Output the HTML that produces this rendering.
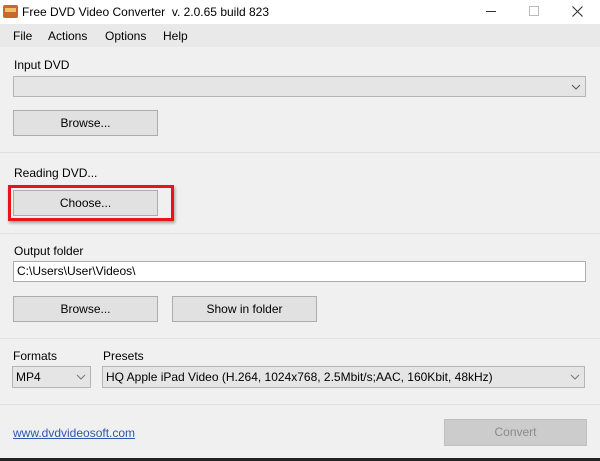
<!DOCTYPE html><html><head><style>
*{margin:0;padding:0;box-sizing:border-box}
body{width:600px;height:461px;background:#f0f0f0;font-family:"Liberation Sans",sans-serif;font-size:12px;color:#000;position:relative;overflow:hidden}
.a{position:absolute}
.btn{position:absolute;background:#e1e1e1;border:1px solid #adadad;text-align:center;line-height:24px;font-size:12px}
.sep{position:absolute;left:0;width:600px;height:1px;background:#e0e0e0}
.cb{position:absolute;background:#e5e5e5;border:1px solid #b5b5b5;line-height:19px;padding-left:3px}
.ch{position:absolute;right:4px;top:50%;margin-top:-3px}
</style></head><body>
<div class="a" style="left:0;top:0;width:600px;height:24px;background:#fff"></div>
<div class="a" style="left:3px;top:5px;width:15px;height:13px;background:#c8682a;border-radius:2px"></div>
<div class="a" style="left:5px;top:8px;width:11px;height:4px;background:#f3c06a"></div>
<div class="a" style="left:22px;top:5px;font-size:12px">Free DVD Video Converter&nbsp; v. 2.0.65 build 823</div>
<div class="a" style="left:486px;top:11px;width:10px;height:1px;background:#333"></div>
<div class="a" style="left:529px;top:6px;width:10px;height:10px;border:1px solid #bbb"></div>
<svg class="a" style="left:572px;top:6px" width="11" height="11"><path d="M0.5 0.5L10.5 10.5M10.5 0.5L0.5 10.5" stroke="#333" stroke-width="1.1"/></svg>
<div class="a" style="left:0;top:24px;width:600px;height:23px;background:#e9e9e9"></div>
<div class="a" style="left:13px;top:29px">File</div>
<div class="a" style="left:48px;top:29px">Actions</div>
<div class="a" style="left:105px;top:29px">Options</div>
<div class="a" style="left:163px;top:29px">Help</div>
<div class="a" style="left:14px;top:58px">Input DVD</div>
<div class="cb" style="left:13px;top:76px;width:573px;height:21px"><svg class="ch" width="10" height="6"><path d="M1 1L5 5L9 1" fill="none" stroke="#555"/></svg></div>
<div class="btn" style="left:13px;top:110px;width:145px;height:26px">Browse...</div>
<div class="sep" style="top:152px"></div>
<div class="a" style="left:14px;top:166px">Reading DVD...</div>
<div class="btn" style="left:13px;top:190px;width:145px;height:26px">Choose...</div>
<div class="a" style="left:8px;top:185px;width:166px;height:36px;border:3px solid #e8141b;box-shadow:1px 2px 3px rgba(0,0,0,.35)"></div>
<div class="sep" style="top:233px"></div>
<div class="a" style="left:14px;top:244px">Output folder</div>
<div class="a" style="left:13px;top:261px;width:573px;height:21px;background:#fff;border:1px solid #adadad;line-height:19px;padding-left:3px">C:\Users\User\Videos\</div>
<div class="btn" style="left:13px;top:296px;width:145px;height:26px">Browse...</div>
<div class="btn" style="left:172px;top:296px;width:145px;height:26px">Show in folder</div>
<div class="sep" style="top:338px"></div>
<div class="a" style="left:13px;top:349px">Formats</div>
<div class="a" style="left:103px;top:349px">Presets</div>
<div class="cb" style="left:12px;top:366px;width:79px;height:22px;line-height:20px">MP4<svg class="ch" width="10" height="6"><path d="M1 1L5 5L9 1" fill="none" stroke="#777"/></svg></div>
<div class="cb" style="left:102px;top:366px;width:483px;height:22px;line-height:20px">HQ Apple iPad Video (H.264, 1024x768, 2.5Mbit/s;AAC, 160Kbit, 48kHz)<svg class="ch" width="10" height="6"><path d="M1 1L5 5L9 1" fill="none" stroke="#777"/></svg></div>
<div class="sep" style="top:404px"></div>
<div class="a" style="left:13px;top:426px;color:#3355aa;text-decoration:underline">www.dvdvideosoft.com</div>
<div class="btn" style="left:444px;top:419px;width:143px;height:27px;background:#cccccc;border-color:#bfbfbf;color:#8a8a8a;line-height:25px">Convert</div>
<div class="a" style="left:0;top:458px;width:600px;height:3px;background:#222"></div>
</body></html>
